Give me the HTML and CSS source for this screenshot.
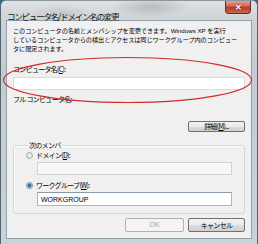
FILE: index.html
```html
<!DOCTYPE html>
<html lang="ja">
  <head>
    <meta charset="UTF-8" />
    <title>コンピュータ名/ドメイン名の変更</title>
    <link rel="stylesheet" href="styles.css">
  </head>
  <body>
    <div class="window">
      <div class="titlebar">
        <span class="title">コンピュータ名/ドメイン名の変更</span>
        <span class="close">✕</span>
      </div>

      <div class="client">
        <div class="intro">
          <div class="line">このコンピュータの名前とメンバシップを変更できます。<span class="latin">Windows XP </span>を実行</div>
          <div class="line">しているコンピュータからの検出とアクセスは同じワークグループ内のコンピュー</div>
          <div class="line">タに限定されます。</div>
        </div>

        <div class="label label-name">コンピュータ名(<u>C</u>):</div>
        <div class="field"></div>

        <div class="label label-full">フル コンピュータ名:</div>

        <div class="row-right">
          <button class="btn btn-more">詳細(<u>M</u>)...</button>
        </div>

        <fieldset class="group">
          <legend>次のメンバ</legend>
          <div class="radio-row">
            <span class="radio"></span>
            <span>ドメイン(<u>D</u>):</span>
          </div>
          <div class="field field-sub field-off"></div>
          <div class="radio-row radio-row-2">
            <span class="radio radio-on"></span>
            <span>ワークグループ(<u>W</u>):</span>
          </div>
          <div class="field field-sub field-blue">WORKGROUP</div>
        </fieldset>

        <div class="actions">
          <button class="btn btn-ok" disabled>OK</button>
          <button class="btn btn-cancel">キャンセル</button>
        </div>
      </div>

      <svg class="mark" width="258" height="244" viewBox="0 0 258 244">
        <ellipse cx="127.5" cy="80" rx="124" ry="22.5" fill="none" stroke="#d42a2a" stroke-width="1.2" />
      </svg>
    </div>
  </body>
</html>
```

FILE: styles.css
```css
body {
  margin: 0;
  font-family: "Noto Sans CJK JP", "Liberation Sans", sans-serif;
  background: #2f6a78;
}
.window {
  position: relative;
  width: 256px;
  height: 243px;
  border: 1px solid #55656f;
  border-top-color: #8a959d;
  border-radius: 6px 6px 0 0;
  background: linear-gradient(#cfd4d8, #c3ccd3 30%, #c8d2d9);
  overflow: hidden;
}
.titlebar {
  height: 19px;
  background:
    radial-gradient(ellipse 40px 10px at 150px 6px, rgba(150, 155, 160, 0.5), transparent),
    radial-gradient(ellipse 30px 8px at 60px 12px, rgba(170, 175, 180, 0.4), transparent),
    linear-gradient(#dfe2e4, #cdd2d6);
}
.title {
  display: inline-block;
  margin: 3px 0 0 6px;
  font-size: 8.5px;
  line-height: 12px;
  letter-spacing: -1.2px;
  color: #1a1a1a;
}
.close {
  position: absolute;
  top: 0;
  left: 224px;
  width: 26px;
  height: 13px;
  border: 1px solid #6b2a2a;
  border-top: none;
  border-radius: 0 0 4px 4px;
  background: linear-gradient(#e3a394, #c9614f 45%, #b23b2a 55%, #cc6a4e);
  color: #fff;
  font-size: 8px;
  font-weight: bold;
  line-height: 12px;
  text-align: center;
  text-shadow: 0 0 2px #5a1a10;
  box-sizing: border-box;
}
.client {
  margin: 0 5px 0 5px;
  height: 217px;
  background: #f0f0f0;
  border: 1px solid #95a1a9;
  padding: 0 6px 0 6px;
  font-size: 7px;
  color: #000;
  letter-spacing: -0.7px;
}
.intro {
  padding-top: 5px;
  font-size: 6.2px;
  letter-spacing: -0.1px;
  white-space: nowrap;
}
.line {
  height: 9px;
  line-height: 9px;
}
.latin {
  font-family: "Liberation Sans", sans-serif;
  letter-spacing: 0;
}
.label {
  line-height: 10px;
}
.label-name {
  margin-top: 11px;
}
.label-full {
  margin-top: 4px;
}
.field {
  height: 13px;
  margin-top: 3px;
  background: #fff;
  border: 1px solid #d8dcdf;
  box-sizing: border-box;
  font-family: "Liberation Sans", sans-serif;
  font-size: 7px;
  letter-spacing: 0;
  line-height: 12px;
  padding-left: 3px;
}
.row-right {
  display: flex;
  justify-content: flex-end;
  margin-top: 17px;
}
.btn {
  font-family: inherit;
  font-size: 7px;
  letter-spacing: -0.7px;
  color: #000;
  padding: 0;
  border: 1px solid #707070;
  border-radius: 2px;
  background: linear-gradient(#f2f2f2, #ebebeb 50%, #dddddd 51%, #cfcfcf);
  box-sizing: border-box;
}
.btn-more {
  width: 57px;
  height: 11px;
  line-height: 9px;
}
.group {
  margin: 8px 0 0 0;
  padding: 0 12px 0 12px;
  height: 74px;
  border: 1px solid #d2d9de;
  border-radius: 3px;
  box-shadow: inset 1px 1px 0 #fff;
  box-sizing: border-box;
}
.group legend {
  padding: 0 1px;
  margin-left: 2px;
  line-height: 10px;
}
.radio-row {
  display: flex;
  align-items: center;
  gap: 3px;
  height: 10px;
}
.radio-row-2 {
  margin-top: 5px;
}
.radio {
  width: 7px;
  height: 7px;
  border-radius: 50%;
  border: 1px solid #a4a9ad;
  background: radial-gradient(#f4f4f4, #d6d9dc);
  box-sizing: border-box;
}
.radio-on {
  background: radial-gradient(circle, #2a5a7a 0, #3f7fa6 1.5px, #d6dde2 2.5px);
  border-color: #7f8d96;
}
.field-sub {
  margin-left: 11px;
  margin-top: 2px;
}
.field-off {
  background: #f7f7f7;
  border-color: #d0d4d7;
}
.field-blue {
  height: 14px;
  border-color: #a8b8c8;
  border-top-color: #8a9aab;
  line-height: 13px;
}
.actions {
  display: flex;
  justify-content: flex-end;
  gap: 4px;
  margin-top: 4px;
}
.btn-ok,
.btn-cancel {
  width: 59px;
  height: 14px;
  line-height: 12px;
}
.btn-cancel {
  width: 57px;
}
.btn-ok {
  color: #a3a3a3;
  border-color: #adb2b5;
  background: #f4f4f4;
  font-family: "Liberation Sans", sans-serif;
  letter-spacing: 0;
}
.mark {
  position: absolute;
  left: -1px;
  top: -1px;
}
```
